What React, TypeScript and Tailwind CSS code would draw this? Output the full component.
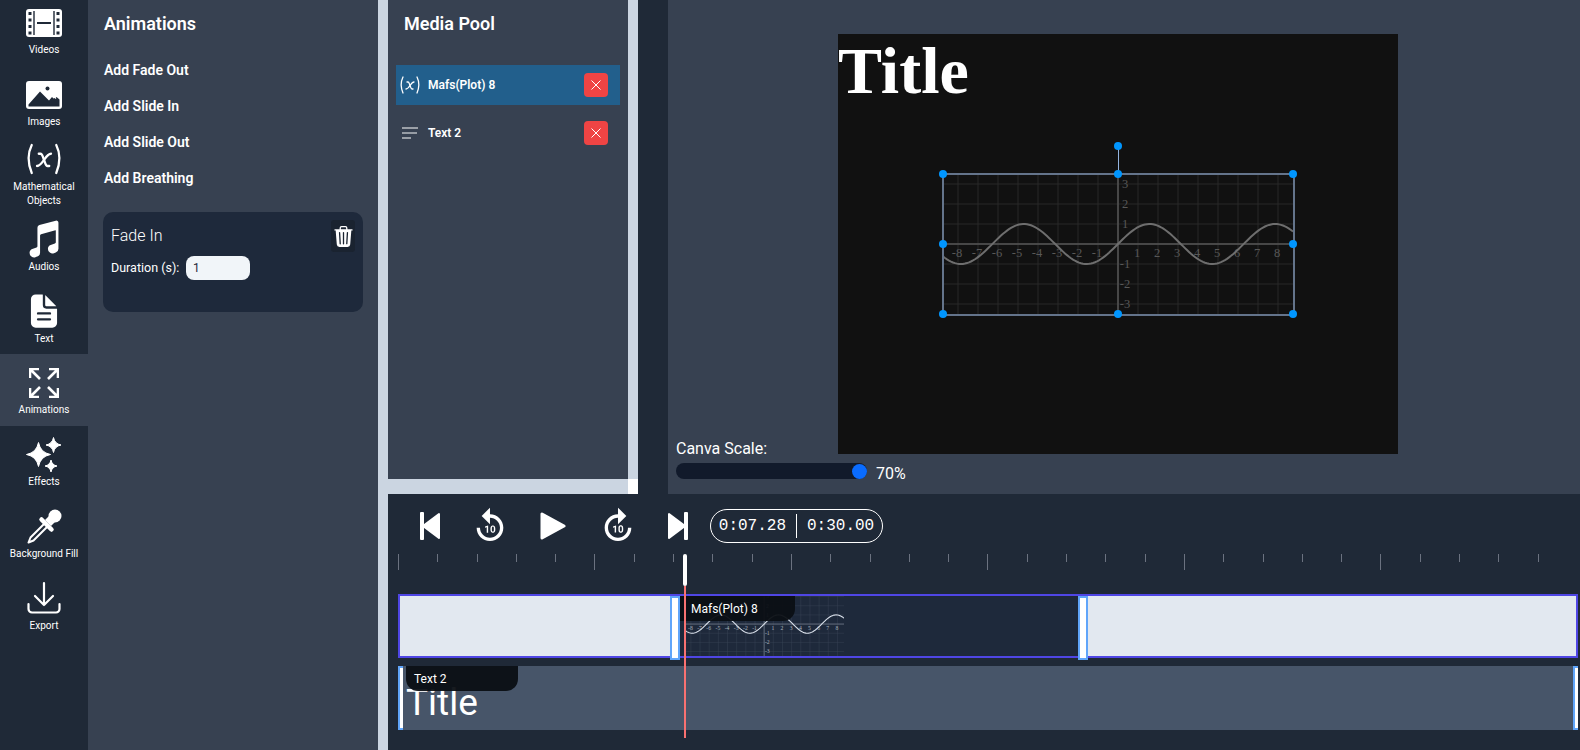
import { BsTrash3Fill } from "react-icons/bs"
import { IoDocumentText, IoMusicalNotes } from "react-icons/io5"
import { MdForward10, MdReplay10 } from "react-icons/md"
import { TbVariable } from "react-icons/tb"

const FONT = "font-['Roboto',sans-serif]"

const FilmIcon = () => (
  <svg width="36" height="28" viewBox="0 0 36 28">
    <rect width="36" height="28" rx="3" fill="#fff" />
    <path d="M8 2v24M28 2v24" stroke="#1f2937" strokeWidth="1.4" />
    <path d="M11 14h14" stroke="#1f2937" strokeWidth="2" />
    <g fill="#1f2937">
      <rect x="2.5" y="3" width="3" height="3" />
      <rect x="2.5" y="9.5" width="3" height="3" />
      <rect x="2.5" y="16" width="3" height="3" />
      <rect x="2.5" y="22.5" width="3" height="3" />
      <rect x="30.5" y="3" width="3" height="3" />
      <rect x="30.5" y="9.5" width="3" height="3" />
      <rect x="30.5" y="16" width="3" height="3" />
      <rect x="30.5" y="22.5" width="3" height="3" />
    </g>
  </svg>
)

const PictureIcon = () => (
  <svg width="36" height="28" viewBox="0 0 36 28">
    <rect width="36" height="28" rx="3" fill="#fff" />
    <circle cx="21.5" cy="7.5" r="2" fill="#1f2937" />
    <path d="M2.5 25.5v-2L14 10.5l9 9 3-3.5 1.5 1.5 3-1.5 3 2.5v7z" fill="#1f2937" />
    <path d="M22 15.5l3-3 5 5" stroke="#fff" strokeWidth="1.4" fill="none" />
  </svg>
)

const ExpandIcon = () => (
  <svg width="30" height="30" viewBox="0 0 30 30" fill="none" stroke="#fff" strokeWidth="2.6">
    <path d="M1 10V1h9M1.5 1.5l9.5 9.5" />
    <path d="M20 1h9v9M28.5 1.5L19 11" />
    <path d="M1 20v9h9M1.5 28.5l9.5-9.5" />
    <path d="M20 29h9v-9M28.5 28.5L19 19" />
  </svg>
)

const star = (cx: number, cy: number, r: number) => {
  const k = r * 0.16
  return `M${cx} ${cy - r}Q${cx + k} ${cy - k} ${cx + r} ${cy}Q${cx + k} ${cy + k} ${cx} ${cy + r}Q${cx - k} ${cy + k} ${cx - r} ${cy}Q${cx - k} ${cy - k} ${cx} ${cy - r}z`
}

const SparkleIcon = () => (
  <svg width="36" height="36" viewBox="0 0 36 36" fill="#fff" stroke="#fff" strokeWidth="1" strokeLinejoin="round">
    <path d={star(12.5, 17.5, 12)} />
    <path d={star(27.5, 8, 7.5)} />
    <path d={star(25, 29, 6)} />
  </svg>
)

const DropperIcon = () => (
  <svg width="36" height="36" viewBox="0 0 36 36" fill="none">
    <circle cx="29" cy="7" r="6.5" fill="#fff" />
    <path d="M24 6l6 6-5 5-6-6z" fill="#fff" />
    <path d="M15.5 10.5l10 10" stroke="#fff" strokeWidth="4.5" strokeLinecap="round" />
    <path d="M18 15L4.5 28.5l-2 5 5-2L21 18" stroke="#fff" strokeWidth="2" strokeLinejoin="round" />
  </svg>
)

const ExportIcon = () => (
  <svg width="34" height="34" viewBox="0 0 34 34" fill="none" stroke="#fff" strokeWidth="2.2" strokeLinecap="round" strokeLinejoin="round">
    <path d="M17 2v22M8 15l9 9 9-9" />
    <path d="M1.5 23v5a3.5 3.5 0 0 0 3.5 3.5h24a3.5 3.5 0 0 0 3.5-3.5v-5" />
  </svg>
)

const TextLinesIcon = () => (
  <svg width="16" height="12" viewBox="0 0 16 12" stroke="#fff" fill="none">
    <path d="M0 1h16" strokeWidth="1" />
    <path d="M0 6h15" strokeWidth="1.2" strokeOpacity="0.8" />
    <path d="M0 11h9" strokeWidth="1" />
  </svg>
)

const CrossIcon = () => (
  <svg width="10" height="10" viewBox="0 0 10 10" stroke="#fff" strokeWidth="1">
    <path d="M0.5 0.5l9 9M9.5 0.5l-9 9" />
  </svg>
)

const SkipBackIcon = () => (
  <svg width="20" height="28" viewBox="0 0 20 28" fill="#fff" stroke="#fff" strokeWidth="2" strokeLinejoin="round">
    <path d="M1 1h2v26H1z" />
    <path d="M19 2v24L3 14z" />
  </svg>
)

const SkipForwardIcon = () => (
  <svg width="20" height="28" viewBox="0 0 20 28" fill="#fff" stroke="#fff" strokeWidth="2" strokeLinejoin="round">
    <path d="M17 1h2v26h-2z" />
    <path d="M1 2v24l16-12z" />
  </svg>
)

const PlayIcon = () => (
  <svg width="26" height="28" viewBox="0 0 26 28" fill="#fff" stroke="#fff" strokeWidth="3" strokeLinejoin="round">
    <path d="M2 2v24l22-12z" />
  </svg>
)

const sidebarItems = [
  { label: "Videos", icon: <FilmIcon />, gap: "mt-[6px]", shift: "pt-[6px]" },
  { label: "Images", icon: <PictureIcon />, gap: "mt-[6px]", shift: "pt-[6px]" },
  { label: "Mathematical Objects", icon: <TbVariable size={42} strokeWidth={1.3} />, gap: "mt-0", shift: "pb-[2px]" },
  { label: "Audios", icon: <IoMusicalNotes size={42} />, gap: "mt-0", shift: "" },
  { label: "Text", icon: <IoDocumentText size={38} />, gap: "mt-[2px]", shift: "pt-[1px]" },
  { label: "Animations", icon: <ExpandIcon />, gap: "mt-[5px]", shift: "pt-[4px]", active: true },
  { label: "Effects", icon: <SparkleIcon />, gap: "mt-[2px]", shift: "pt-[2px]" },
  { label: "Background Fill", icon: <DropperIcon />, gap: "mt-[2px]", shift: "pt-[2px]" },
  { label: "Export", icon: <ExportIcon />, gap: "mt-[4px]", shift: "pt-[2px]" },
]

const animationActions = ["Add Fade Out", "Add Slide In", "Add Slide Out", "Add Breathing"]

const Sidebar = () => (
  <aside className="w-[88px] shrink-0 overflow-hidden bg-[#1f2937] text-white">
    <div className="-mt-[6px]">
      {sidebarItems.map((item) => (
        <div
          key={item.label}
          className={`flex h-[72px] flex-col items-center justify-center ${item.shift} ${item.active ? "bg-[#374151]" : ""}`}
        >
          {item.icon}
          <span className={`${item.gap} text-center text-[10px] leading-[14px]`}>{item.label}</span>
        </div>
      ))}
    </div>
  </aside>
)

const AnimationsPanel = () => (
  <section className="w-[290px] shrink-0 bg-[#374151] pl-[15px] pr-[15px] text-white">
    <h2 className="pl-[1px] pt-[11px] text-[18px] font-semibold leading-[26px]">Animations</h2>
    <div className="mt-[15px] flex flex-col pl-[1px]">
      {animationActions.map((action) => (
        <button key={action} className="h-[36px] text-left text-[14px] font-semibold">
          {action}
        </button>
      ))}
    </div>
    <div className="relative mt-[16px] h-[100px] w-[260px] rounded-[10px] bg-[#1e293b] px-[8px] pt-[12px]">
      <div className="text-[16px] leading-[24px] font-light">Fade In</div>
      <div className="mt-[8px] flex items-center gap-[8px]">
        <span className="w-[67px] whitespace-nowrap text-[12.5px] leading-[24px]">Duration (s):</span>
        <div className="flex h-[24px] w-[64px] items-center rounded-lg bg-[#f1f5f9] pl-[7px] text-[12px] text-[#1e293b]">1</div>
      </div>
      <div className="absolute right-[8px] top-[8px] flex h-[32px] w-[24px] items-center justify-center rounded-[3px] bg-[#1a2330]">
        <BsTrash3Fill size={21} />
      </div>
    </div>
  </section>
)

const MediaRow = ({ label, icon, selected }: { label: string; icon: React.ReactNode; selected?: boolean }) => (
  <div className={`flex h-[40px] items-center pl-[5px] pr-[12px] ${selected ? "bg-[#225f8c]" : ""}`}>
    <span className="flex w-[18px] justify-center">{icon}</span>
    <span className="ml-[9px] flex-1 text-[12px] font-semibold">{label}</span>
    <button className="flex h-[24px] w-[24px] items-center justify-center rounded-[4px] bg-[#ef4444]">
      <CrossIcon />
    </button>
  </div>
)

const MediaPool = () => (
  <section className="h-[479px] w-[240px] shrink-0 bg-[#374151] px-[8px] text-white">
    <h2 className="pl-[8px] pt-[11px] text-[18px] font-semibold leading-[26px]">Media Pool</h2>
    <div className="mt-[28px] flex flex-col gap-[8px]">
      <MediaRow label="Mafs(Plot) 8" icon={<TbVariable size={24} strokeWidth={1.3} className="shrink-0" />} selected />
      <MediaRow label="Text 2" icon={<TextLinesIcon />} />
    </div>
  </section>
)

// the plot in canvas px: 350x140 with the origin in the middle, one unit is 20px
const PlotSvg = ({ grid, axis, curve, label, curveWidth = 2 }: { grid: string; axis: string; curve: string; label: string; curveWidth?: number }) => {
  const xs = Array.from({ length: 17 }, (_, i) => i - 8)
  const ys = Array.from({ length: 7 }, (_, i) => i - 3)
  let d = ""
  for (let px = -175; px <= 175; px += 2) {
    d += `${px === -175 ? "M" : "L"}${px} ${(-20 * Math.sin(px / 20)).toFixed(2)} `
  }
  return (
    <svg width="350" height="140" viewBox="-175 -70 350 140" className="block overflow-visible">
      {xs.map((x) => (
        <line key={x} x1={x * 20} x2={x * 20} y1={-70} y2={70} stroke={grid} strokeWidth="1" />
      ))}
      {ys.map((y) => (
        <line key={y} x1={-175} x2={175} y1={y * 20} y2={y * 20} stroke={grid} strokeWidth="1" />
      ))}
      <line x1={-175} x2={175} y1={0} y2={0} stroke={axis} strokeWidth="1.5" />
      <line x1={0} x2={0} y1={-70} y2={70} stroke={axis} strokeWidth="1.5" />
      <g fill={label} fontFamily="'Liberation Serif', serif" fontSize="12.5" textAnchor="middle">
        {xs.filter((x) => x !== 0).map((x) => (
          <text key={x} x={x * 20 - 1} y={13}>{x}</text>
        ))}
        {ys.filter((y) => y !== 0).map((y) => (
          <text key={y} x={7} y={-y * 20 + 4}>{y}</text>
        ))}
      </g>
      <path d={d} fill="none" stroke={curve} strokeWidth={curveWidth} />
    </svg>
  )
}

const handleSpots = [
  "left-[-4px] top-[-4px]",
  "left-[171px] top-[-4px]",
  "left-[346px] top-[-4px]",
  "left-[-4px] top-[66px]",
  "left-[346px] top-[66px]",
  "left-[-4px] top-[136px]",
  "left-[171px] top-[136px]",
  "left-[346px] top-[136px]",
  "left-[171px] top-[-32px]",
]

const CanvasPanel = () => (
  <section className="relative flex-1 bg-[#374151] text-white">
    <div className="relative ml-[170px] mt-[34px] h-[420px] w-[560px] bg-[#111111]">
      <div className="pt-[5px] font-['Liberation_Serif',serif] text-[66px] font-bold leading-[64px]">Title</div>
      {/* selected plot on the canvas */}
      <div className="absolute left-[105px] top-[140px] h-[141px] w-[351px] outline-2 -outline-offset-1 outline-[#64748b]">
        <PlotSvg grid="#282828" axis="#565656" curve="#6e6e6e" label="#585858" />
        <div className="absolute left-[175px] top-[-28px] h-[28px] w-[1px] bg-[#93b4e0]" />
        {handleSpots.map((spot) => (
          <div key={spot} className={`absolute h-[8px] w-[8px] rounded-full bg-[#0096ff] ${spot}`} />
        ))}
      </div>
    </div>
    <div className="absolute left-[8px] top-[438px] text-[16px] leading-[22px]">Canva Scale:</div>
    <div className="absolute left-[8px] top-[463px] flex h-[16px] items-start">
      <div className="relative h-[16px] w-[191px] rounded-full bg-[#111a2b]">
        <div className="absolute right-[0px] top-[0.5px] h-[15px] w-[15px] rounded-full bg-[#0a6cff]" />
      </div>
      <span className="ml-[9px] mt-[1px] text-[16px] leading-[20px]">70%</span>
    </div>
  </section>
)

const Handle = ({ thin }: { thin?: boolean }) => (
  <div className={`shrink-0 border-2 border-[#60a5fa] bg-white ${thin ? "h-[64px] w-[5px] border-r-0" : "h-[64px] w-[10px]"}`} />
)

const ticks = Array.from({ length: 30 }, (_, i) => i)

const Timeline = () => (
  <section className="relative h-[256px] bg-[#1f2937] pl-[10px] text-white">
    <div className="flex h-[60px] items-center pl-[12px] pt-[4px]">
      <span className="flex w-[40px] justify-center"><SkipBackIcon /></span>
      <span className="ml-[20px] flex w-[40px] justify-center"><MdReplay10 size={40} /></span>
      <span className="ml-[23px] flex w-[40px] justify-center"><PlayIcon /></span>
      <span className="ml-[25px] flex w-[40px] justify-center"><MdForward10 size={40} /></span>
      <span className="ml-[20px] flex w-[40px] justify-center"><SkipForwardIcon /></span>
      <div className="ml-[12px] flex h-[34px] w-[173px] items-center justify-center rounded-full border border-white font-['Liberation_Mono',monospace] text-[16px]">
        <span>0:07.28</span>
        <span className="mx-[10px] h-[24px] w-[1px] bg-white" />
        <span>0:30.00</span>
      </div>
    </div>
    <div className="flex h-[40px]">
      {ticks.map((i) => (
        <div key={i} className="w-[39.3px] shrink-0">
          <div className={`w-[1px] bg-[#6b7280] ${i % 5 === 0 ? "h-[16px]" : "h-[8px]"}`} />
        </div>
      ))}
    </div>
    <div className="flex h-[64px] w-[1180px] border-2 border-[#4f46e5] bg-[#1e293b]">
      <div className="w-[270px] shrink-0 bg-[#e2e8f0]" />
      <Handle />
      <div className="relative w-[398px] shrink-0 overflow-hidden">
        <div className="absolute left-[4px] top-[-4px] h-[64px] w-[160px] overflow-hidden">
          <div className="origin-top-left scale-[0.458]">
            <PlotSvg grid="#3a4556" axis="#7b8494" curve="#dbe2ec" label="#aab2bd" curveWidth={2.4} />
          </div>
        </div>
        <div className="absolute left-0 top-0 flex h-[25px] w-[115px] items-center rounded-br-xl bg-[#0b0f14]/95 pl-[11px] text-[12px]">Mafs(Plot) 8</div>
      </div>
      <Handle />
      <div className="flex-1 bg-[#e2e8f0]" />
    </div>
    <div className="relative mt-[8px] flex h-[64px] w-[1180px] justify-between bg-[#475569]">
      <Handle thin />
      <div className="h-[64px] w-[5px] border-2 border-r-0 border-[#60a5fa] bg-white" />
      <div className="absolute left-[8px] top-[10px] text-[37px] leading-[54px]">Title</div>
      <div className="absolute left-[8px] top-0 flex h-[25px] w-[112px] items-center rounded-b-xl bg-[#0b0f14]/95 pl-[8px] text-[12px]">Text 2</div>
    </div>
    {/* playhead */}
    <div className="absolute left-[295px] top-[60px] h-[32px] w-[4px] rounded-full bg-white" />
    <div className="absolute left-[296px] top-[92px] h-[152px] w-[2px] bg-[#f87171]" />
  </section>
)

export default function App() {
  return (
    <div className={`flex h-[750px] w-[1580px] overflow-hidden bg-[#cbd5e1] ${FONT}`}>
      <Sidebar />
      <AnimationsPanel />
      <div className="w-[10px] shrink-0" />
      <div className="flex w-[1192px] flex-col">
        <div className="flex h-[494px]">
          <MediaPool />
          <div className="flex w-[10px] shrink-0 flex-col">
            <div className="h-[479px] bg-[#cbd5e1]" />
            <div className="h-[15px] bg-white" />
          </div>
          <div className="w-[30px] shrink-0 bg-[#1f2937]" />
          <CanvasPanel />
        </div>
        <Timeline />
      </div>
    </div>
  )
}
